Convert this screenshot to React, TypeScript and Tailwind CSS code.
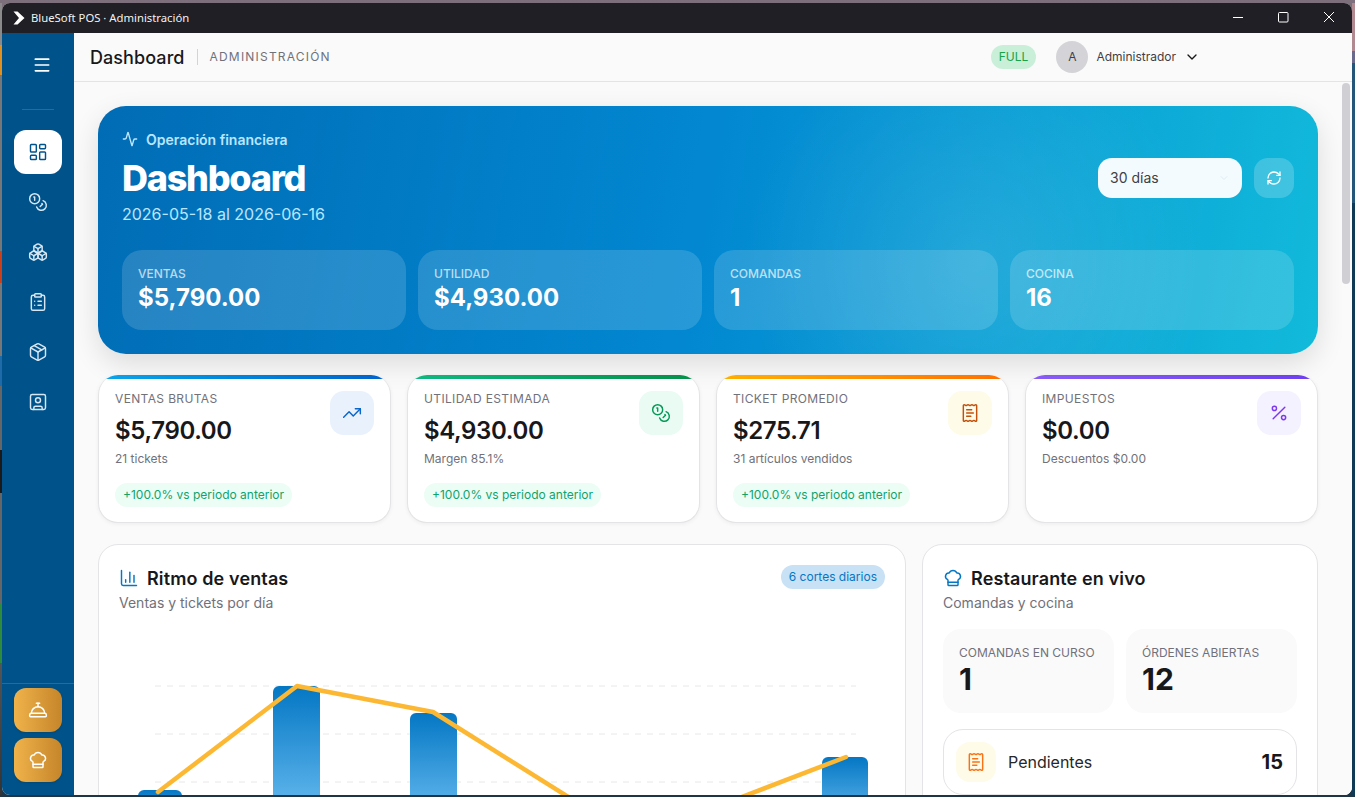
import React from 'react';
import {
  Activity,
  Boxes,
  ChartColumn,
  ChefHat,
  ChevronDown,
  ClipboardList,
  Coins,
  ConciergeBell,
  LayoutDashboard,
  Menu,
  Package,
  Percent,
  ReceiptText,
  RefreshCw,
  SquareUser,
  TrendingUp,
} from 'lucide-react';

const heroStats = [
  { label: 'VENTAS', value: '$5,790.00' },
  { label: 'UTILIDAD', value: '$4,930.00' },
  { label: 'COMANDAS', value: '1' },
  { label: 'COCINA', value: '16' },
];

const kpis = [
  {
    label: 'VENTAS BRUTAS',
    value: '$5,790.00',
    sub: '21 tickets',
    trend: true,
    bar: 'from-[#0ea5e9] to-[#0062cc]',
    box: 'bg-[#e8f1fc] text-[#0a66c8]',
    Icon: TrendingUp,
  },
  {
    label: 'UTILIDAD ESTIMADA',
    value: '$4,930.00',
    sub: 'Margen 85.1%',
    trend: true,
    bar: 'from-[#10b981] to-[#059048]',
    box: 'bg-[#e9fbf3] text-[#059a58]',
    Icon: Coins,
  },
  {
    label: 'TICKET PROMEDIO',
    value: '$275.71',
    sub: '31 artículos vendidos',
    trend: true,
    bar: 'from-[#ffb000] to-[#ff7000]',
    box: 'bg-[#fefbe8] text-[#c2510c]',
    Icon: ReceiptText,
  },
  {
    label: 'IMPUESTOS',
    value: '$0.00',
    sub: 'Descuentos $0.00',
    trend: false,
    bar: 'from-[#8b5cf6] to-[#6d3ff0]',
    box: 'bg-[#f4f2ff] text-[#7c3aed]',
    Icon: Percent,
  },
];

function NavItem({ Icon, active }: { Icon: typeof Menu; active?: boolean }) {
  return (
    <div
      className={
        active
          ? 'w-12 h-11 rounded-xl bg-white text-[#00528a] flex items-center justify-center'
          : 'w-12 h-11 rounded-xl text-[#d6e6f2] flex items-center justify-center'
      }
    >
      <Icon className="w-5 h-5" strokeWidth={1.75} />
    </div>
  );
}

function SalesChart() {
  const bars = [
    { x: 138, top: 790, w: 44 },
    { x: 273, top: 686, w: 47 },
    { x: 410, top: 713, w: 47 },
    { x: 822, top: 757, w: 46 },
  ];
  // svg coords are offset so they read as window coordinates
  return (
    <svg viewBox="99 630 806 170" className="w-[806px] h-[170px] block">
      <defs>
        <linearGradient id="barFill" x1="0" y1="0" x2="0" y2="1">
          <stop offset="0" stopColor="#0477c4" />
          <stop offset="1" stopColor="#72c2f4" />
        </linearGradient>
      </defs>
      {[686, 734, 782].map((y) => (
        <line key={y} x1="155" x2="856" y1={y} y2={y} stroke="#e8e8ea" strokeWidth="1" strokeDasharray="6 6" />
      ))}
      {bars.map((b) => (
        <path
          key={b.x}
          d={`M${b.x} 830V${b.top + 6}a6 6 0 0 1 6 -6H${b.x + b.w - 6}a6 6 0 0 1 6 6V830Z`}
          fill="url(#barFill)"
        />
      ))}
      <polyline
        points="158,792 297,686 433,712 570,798 708,810 846,757"
        fill="none"
        stroke="#fdb833"
        strokeWidth="4.5"
        strokeLinecap="round"
        strokeLinejoin="round"
      />
    </svg>
  );
}

export default function App() {
  return (
    <div className="w-screen h-screen overflow-hidden pt-[3px] pb-[2px] flex bg-[linear-gradient(180deg,#7d6f7c_0%,#3d4d5f_30%,#1f3444_100%)] font-['Inter','Noto_Sans',sans-serif]">
      {/* desktop wallpaper peeking out on the left */}
      <div className="w-[2px] shrink-0 bg-[linear-gradient(180deg,#8a8a8a_0,#8a8a8a_42px,#e09020_42px,#e09020_72px,#777_72px,#777_248px,#c8401c_248px,#c8401c_280px,#777_280px,#777_353px,#1f6aa8_353px,#1f6aa8_383px,#666_383px,#666_447px,#1a1a1a_447px,#1a1a1a_490px,#666_490px,#666_600px,#2e8a3c_600px,#2e8a3c_660px,#555_660px,#333_100%)]" />
      <div className="flex-1 min-w-0 h-full rounded-lg overflow-hidden flex flex-col bg-[#fafafa]">
        {/* window title bar */}
        <div className="h-[30px] shrink-0 bg-[#1f1f25] flex items-center text-white">
          <svg viewBox="0 0 12 14" className="w-[12px] h-[14px] ml-[11px]">
            <path d="M0.5 0.5H4.5L11.5 7L4.5 13.5H0.5L6 7Z" fill="#fff" />
          </svg>
          <span className="ml-[6px] text-[11.3px] font-['Noto_Sans','Inter',sans-serif] text-[#f2f2f2]">BlueSoft POS · Administración</span>
          <div className="ml-auto flex items-center h-full">
            <svg viewBox="0 0 12 12" className="w-[12px] h-[12px] mr-[33px] text-white">
              <path d="M0 5.5H10" stroke="currentColor" strokeWidth="1" />
            </svg>
            <svg viewBox="0 0 12 12" className="w-[12px] h-[12px] mr-[33px] text-white">
              <rect x="0.5" y="0.5" width="9.5" height="9.5" rx="1" stroke="currentColor" fill="none" />
            </svg>
            <svg viewBox="0 0 12 12" className="w-[12px] h-[12px] mr-[17px] text-white">
              <path d="M1 0L11 10M11 0L1 10" stroke="currentColor" strokeWidth="1" />
            </svg>
          </div>
        </div>

        <div className="flex-1 flex min-h-0">
          {/* sidebar */}
          <aside className="w-[72px] shrink-0 bg-[#00528a] flex flex-col items-center">
            <div className="h-[64px] flex items-center justify-center text-white shrink-0 w-full pl-2">
              <Menu className="w-5 h-5" strokeWidth={2} />
            </div>
            <div className="w-8 h-px bg-white/15 mt-[12px]" />
            <div className="flex flex-col gap-[6px] mt-5">
              <NavItem Icon={LayoutDashboard} active />
              <NavItem Icon={Coins} />
              <NavItem Icon={Boxes} />
              <NavItem Icon={ClipboardList} />
              <NavItem Icon={Package} />
              <NavItem Icon={SquareUser} />
            </div>
            <div className="mt-auto w-full border-t border-white/15 flex flex-col items-center gap-[6px] pt-1 pb-[13px]">
              <div className="w-12 h-11 rounded-xl bg-gradient-to-r from-[#f0b34a] to-[#c5852a] shadow-sm flex items-center justify-center text-white">
                <ConciergeBell className="w-5 h-5" strokeWidth={1.75} />
              </div>
              <div className="w-12 h-11 rounded-xl bg-gradient-to-r from-[#f0b34a] to-[#c5852a] shadow-sm flex items-center justify-center text-white">
                <ChefHat className="w-5 h-5" strokeWidth={1.75} />
              </div>
            </div>
          </aside>

          <div className="flex-1 min-w-0 flex flex-col">
            {/* top header */}
            <header className="h-[49px] shrink-0 bg-[#fafafa] border-b border-[#e4e4e7] flex items-center pl-4 pr-[152px]">
              <h1 className="text-[18px] font-medium tracking-[0.004em] text-[#18181b]">Dashboard</h1>
              <div className="w-px h-4 bg-[#d4d4d8] mx-3" />
              <span className="text-[12px] tracking-[0.1em] text-[#71717a]">ADMINISTRACIÓN</span>
              <div className="ml-auto flex items-center">
                <span className="h-6 px-2 rounded-full bg-[#c9efd9] text-[#16a34a] text-[12px] flex items-center">FULL</span>
                <div className="w-8 h-8 rounded-full bg-[#d4d4d8] text-[#3f3f46] text-[12px] flex items-center justify-center ml-5">A</div>
                <span className="ml-2 text-[12px] text-[#3f3f46]">Administrador</span>
                <ChevronDown className="w-4 h-4 text-[#18181b] ml-2" />
              </div>
            </header>

            <div className="flex-1 min-h-0 flex bg-white">
              <main className="flex-1 min-w-0 overflow-hidden bg-[#fafafa] px-6 pt-6 flex flex-col">
                {/* hero */}
                <section className="h-[248px] shrink-0 rounded-[28px] p-6 text-white shadow-[0_10px_28px_rgba(0,0,0,0.12)] bg-[radial-gradient(circle_at_72%_62%,rgba(255,255,255,0.11),rgba(255,255,255,0)_26%),linear-gradient(100deg,#016cb6_0%,#0288d1_50%,#12bada_100%)]">
                  <div className="flex justify-between items-start h-[120px]">
                    <div>
                      <div className="flex items-center gap-2 text-[14px] font-semibold text-[#bae6fd] h-5 -mt-[1px]">
                        <Activity className="w-4 h-4" />
                        Operación financiera
                      </div>
                      <div className="text-[36px] leading-[40px] font-extrabold mt-[9px] tracking-[-0.035em]">Dashboard</div>
                      <div className="text-[16px] leading-6 text-[#bae6fd] mt-[4px]">2026-05-18 al 2026-06-16</div>
                    </div>
                    <div className="flex items-center gap-3 mt-[28px]">
                      <div className="w-[144px] h-10 rounded-[14px] bg-[#f3fbfe] text-[#3f3f46] text-[14px] leading-[20px] px-3 flex items-center justify-between">
                        30 días
                        <ChevronDown className="w-3 h-3 text-[#e0eef4]" />
                      </div>
                      <div className="w-10 h-10 rounded-[14px] bg-white/20 flex items-center justify-center">
                        <RefreshCw className="w-4 h-4" />
                      </div>
                    </div>
                  </div>
                  <div className="grid grid-cols-4 gap-3">
                    {heroStats.map((s) => (
                      <div key={s.label} className="h-20 rounded-[20px] bg-white/15 px-4 pt-4">
                        <div className="text-[12px] leading-4 font-medium text-white/70">{s.label}</div>
                        <div className="text-[24px] leading-8 font-bold">{s.value}</div>
                      </div>
                    ))}
                  </div>
                </section>

                {/* kpi cards */}
                <section className="grid grid-cols-4 gap-4 mt-[21px] shrink-0">
                  {kpis.map((k) => (
                    <div key={k.label} className="h-[148px] rounded-[20px] bg-white border-x border-b border-[#e4e4e7] shadow-[0_1px_4px_rgba(0,0,0,0.06)] overflow-hidden relative">
                      <div className={`h-1 bg-gradient-to-r ${k.bar}`} />
                      <div className="px-4 pt-3 flex justify-between">
                        <div>
                          <div className="text-[12px] leading-4 tracking-[0.03em] text-[#71717a]">{k.label}</div>
                          <div className="text-[24px] leading-8 font-semibold tracking-[-0.015em] text-[#18181b] mt-[8px]">{k.value}</div>
                          <div className="text-[12px] leading-4 text-[#71717a] mt-[4px]">{k.sub}</div>
                          {k.trend && (
                            <div className="inline-flex items-center h-6 px-2 rounded-full bg-[#ecfdf5] text-[#10a36c] text-[12px] mt-4">
                              +100.0% vs periodo anterior
                            </div>
                          )}
                        </div>
                        <div className={`w-11 h-11 rounded-[14px] shrink-0 flex items-center justify-center ${k.box}`}>
                          <k.Icon className="w-5 h-5" strokeWidth={1.75} />
                        </div>
                      </div>
                    </div>
                  ))}
                </section>

                {/* bottom panels */}
                <section className="flex gap-4 mt-[21px] items-start shrink-0">
                  <div className="w-[808px] shrink-0 h-[400px] rounded-[20px] bg-white border border-[#e4e4e7]">
                    <div className="px-5 pt-[19px] flex justify-between items-start h-[85px]">
                      <div>
                        <div className="flex items-center gap-2 h-7">
                          <ChartColumn className="w-5 h-5 text-[#0477c4]" strokeWidth={1.75} />
                          <span className="text-[18px] font-semibold tracking-[0.007em] text-[#18181b]">Ritmo de ventas</span>
                        </div>
                        <div className="text-[14px] leading-5 text-[#71717a] mt-[1px]">Ventas y tickets por día</div>
                      </div>
                      <span className="h-6 px-2 rounded-full bg-[#c8e1f4] text-[#0477c4] text-[12px] flex items-center mt-[1px]">6 cortes diarios</span>
                    </div>
                    <SalesChart />
                  </div>

                  <div className="flex-1 min-w-0 h-[400px] rounded-[20px] bg-white border border-[#e4e4e7] px-5 pt-[19px]">
                    <div className="flex items-center gap-2 h-7">
                      <ChefHat className="w-5 h-5 text-[#0477c4]" strokeWidth={1.75} />
                      <span className="text-[18px] font-semibold tracking-[0.007em] text-[#18181b]">Restaurante en vivo</span>
                    </div>
                    <div className="text-[14px] leading-5 text-[#71717a] mt-[1px]">Comandas y cocina</div>
                    <div className="grid grid-cols-2 gap-3 mt-4">
                      <div className="h-[84px] rounded-[18px] bg-[#fafafa] px-4 pt-4">
                        <div className="text-[12px] leading-4 text-[#71717a]">COMANDAS EN CURSO</div>
                        <div className="text-[30px] leading-9 font-bold text-[#18181b]">1</div>
                      </div>
                      <div className="h-[84px] rounded-[18px] bg-[#fafafa] px-4 pt-4">
                        <div className="text-[12px] leading-4 text-[#71717a]">ÓRDENES ABIERTAS</div>
                        <div className="text-[30px] leading-9 font-bold text-[#18181b]">12</div>
                      </div>
                    </div>
                    <div className="mt-4 h-[66px] rounded-[20px] border border-[#e4e4e7] pl-3 pr-[13px] flex items-center">
                      <div className="w-10 h-10 rounded-[14px] bg-[#fefbe8] text-[#f97316] flex items-center justify-center">
                        <ReceiptText className="w-5 h-5" strokeWidth={1.75} />
                      </div>
                      <span className="ml-3 text-[16px] text-[#27272a]">Pendientes</span>
                      <span className="ml-auto text-[20px] font-bold text-[#18181b]">15</span>
                    </div>
                  </div>
                </section>
              </main>

              {/* scrollbar */}
              <div className="w-[10px] shrink-0 bg-[#fafafa] pt-px">
                <div className="w-2 h-[201px] rounded-full bg-[#d0d0d4]" />
              </div>
            </div>
          </div>
        </div>
      </div>
      {/* wallpaper on the right */}
      <div className="w-[3px] shrink-0 bg-[linear-gradient(180deg,#b08a90_0,#b08a90_48px,#6a6a8c_48px,#6a6a8c_60px,#24567a_60px,#24567a_200px,#0f3a55_200px,#0f3a55_100%)]" />
    </div>
  );
}
